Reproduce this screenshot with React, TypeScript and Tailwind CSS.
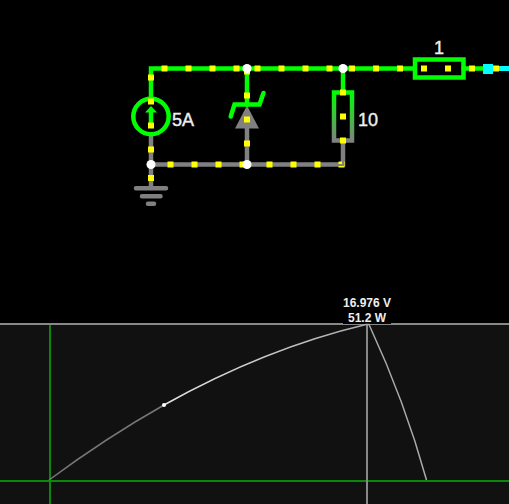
import React from "react";

type Point = [number, number];

const LIVE = "#00ff00";
const GROUND = "#808080";

const chargeDots: Point[] = [
  // supply rail
  [164.5, 68.5], [188.5, 68.5], [212.5, 68.5], [236.5, 68.5], [257.5, 68.5], [281.5, 68.5],
  [305.5, 68.5], [329.5, 68.5], [352, 68.5], [376, 68.5], [400, 68.5], [424, 68.5],
  [448, 68.5], [472, 68.5],
  // current source and ground lead
  [151, 77.5], [151, 101.5], [151, 125.5], [151, 149.5], [151, 178],
  // zener branch
  [247, 71.5], [247, 95.5], [247, 119.5], [247, 143.5],
  // resistor branch
  [343, 92.5], [343, 116.5], [343, 140.5],
  // return rail
  [170.5, 164.5], [194.5, 164.5], [218.5, 164.5], [242.5, 164.5], [269.5, 164.5],
  [293.5, 164.5], [317.5, 164.5], [341.5, 164.5],
];

const nodes: Point[] = [[151, 164.5], [247, 68.5], [247, 164.5], [343, 68.5]];

function Circuit() {
  return (
    <svg role="img" aria-label="Circuit schematic" className="block h-[323px] w-full overflow-hidden">
      <defs>
        <linearGradient id="drop" gradientUnits="userSpaceOnUse" x1="0" y1="92" x2="0" y2="141">
          <stop offset="0" stopColor={LIVE} />
          <stop offset="1" stopColor={GROUND} />
        </linearGradient>
      </defs>
      <g fill="none" strokeWidth="4.5" strokeLinecap="round">
        <g stroke={GROUND}>
          <path d="M151 136V188M151 164.5H343V141M247 128V164.5" />
          <path d="M136 188.3H166M142 196.2H160.5M148 203.7H154" />
        </g>
        <path d="M247 105.5L259 128.5H235Z" fill={GROUND} />
        <g stroke={LIVE}>
          <path d="M151 97V68.5H415M463.5 68.5H484M247 68.5V104.5M343 68.5V92" />
          <path d="M263.5 93L259.5 104.5H234.5L230.7 116.5" />
          <circle cx="151" cy="116.5" r="17.7" />
          <path d="M151 111V126" strokeLinecap="butt" />
          <rect x="415" y="59.5" width="48.5" height="18" />
        </g>
        <path d="M151 106L157 112.5H145Z" fill={LIVE} />
        <rect x="334" y="92.5" width="18" height="48" stroke="url(#drop)" />
      </g>
      <rect x="488" y="66" width="100%" height="5" fill="#00ffff" />
      {chargeDots.map(([x, y]) => (
        <rect key={`${x}-${y}`} x={x - 3} y={y - 3} width="6" height="6" fill="#ffff00" />
      ))}
      <path d="M343 158V165H338" fill="none" stroke={GROUND} strokeWidth="2" />
      <rect x="493" y="65.5" width="6" height="6" fill="#ffff00" />
      <rect x="483" y="64" width="10" height="10" fill="#00ffff" />
      {nodes.map(([x, y]) => (
        <circle key={`${x}-${y}`} cx={x} cy={y} r="4.5" fill="#ffffff" />
      ))}
      <g
        fill="#eeeeee"
        stroke="#eeeeee"
        strokeWidth="0.4"
        className="font-['Liberation_Sans',Arial,sans-serif] text-[18px]"
      >
        <text x="172" y="126">5A</text>
        <text x="358" y="126">10</text>
        <text x="434" y="54">1</text>
      </g>
    </svg>
  );
}

function Scope() {
  return (
    <svg role="img" aria-label="Power against voltage" className="block min-h-[181px] w-full flex-1 overflow-visible">
      <defs>
        <linearGradient id="trace" gradientUnits="userSpaceOnUse" x1="164" y1="0" x2="366" y2="0">
          <stop offset="0" stopColor="#e4e4e4" />
          <stop offset="1" stopColor="#aaaaaa" />
        </linearGradient>
      </defs>
      <rect x="0" y="0" width="100%" height="100%" fill="#111111" />
      <rect x="49" y="1" width="2" height="100%" fill="#0b880b" />
      <rect x="0" y="157" width="100%" height="2" fill="#0b880b" />
      <rect x="0" y="0" width="100%" height="2" fill="#888888" />
      <rect x="366" y="1" width="2" height="100%" fill="#888888" />
      <rect x="343" y="-29" width="48" height="30" fill="#000000" />
      <g fill="none" strokeWidth="1.5">
        <path d="M49 157Q106.5 114.5 164 82" stroke="#777777" />
        <path d="M164 82Q265 25.5 366 1.5" stroke="url(#trace)" />
        <path d="M366 1.5H369Q405 79 426.5 157" stroke="#aaaaaa" />
      </g>
      <circle cx="164" cy="82" r="2" fill="#ffffff" />
      <g
        fill="#eeeeee"
        textAnchor="middle"
        className="font-['Liberation_Sans',Arial,sans-serif] text-xs font-bold"
      >
        <text x="367" y="-16">16.976 V</text>
        <text x="367" y="-1">51.2 W</text>
      </g>
    </svg>
  );
}

export default function App() {
  return (
    <main className="flex min-h-screen flex-col bg-black">
      <Circuit />
      <Scope />
    </main>
  );
}
